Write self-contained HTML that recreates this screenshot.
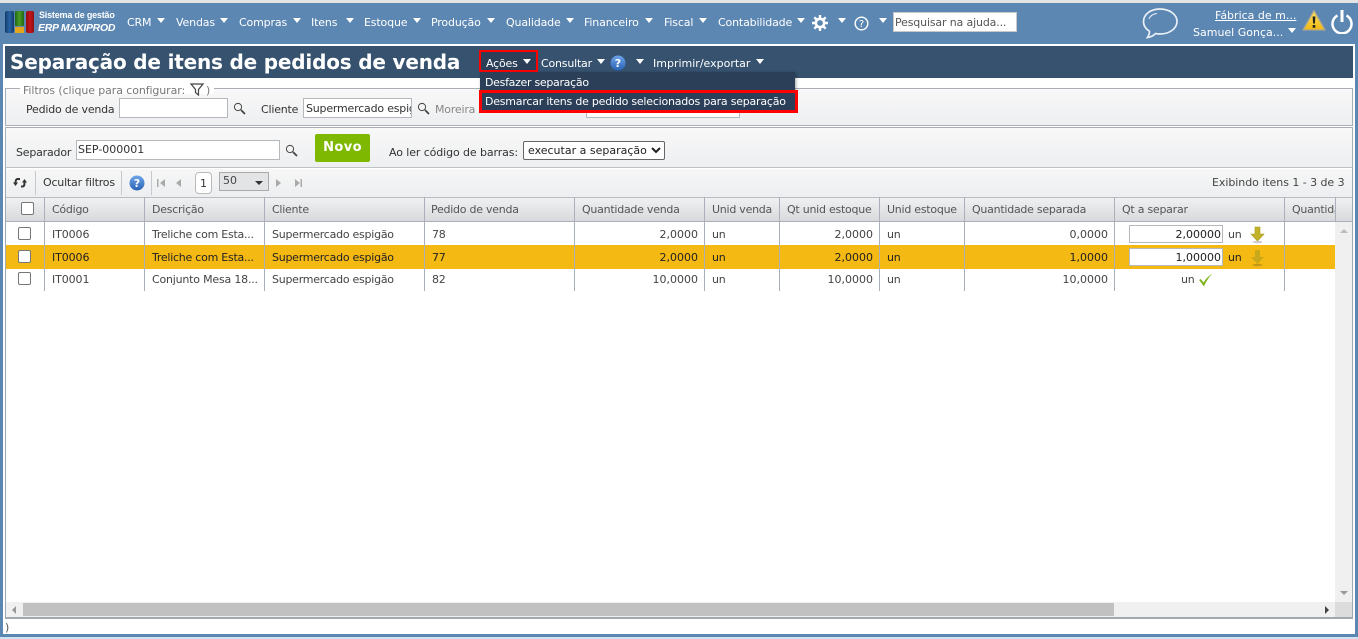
<!DOCTYPE html>
<html><head><meta charset="utf-8">
<style>
html,body{margin:0;padding:0}
body{width:1358px;height:639px;position:relative;overflow:hidden;background:#fff;font-family:"DejaVu Sans","Liberation Sans",sans-serif;font-size:11px;color:#444}
.a,.t{position:absolute;white-space:nowrap}
.t{line-height:14px;letter-spacing:-.2px;margin-top:1px}
.m{color:#fff;top:15px;letter-spacing:-.15px}
.c{position:absolute;width:0;height:0;margin:1px 0 0 1px;border-left:4.5px solid transparent;border-right:4.5px solid transparent;border-top:5px solid #fff}
.inp{position:absolute;background:#fff;border:1px solid #b5b8bc;box-sizing:border-box;line-height:19px;padding-left:2px;color:#333;white-space:nowrap;overflow:hidden;letter-spacing:-.2px}
.v{position:absolute;width:1px;background:#a9b0b9}
.h{top:202px;color:#555;letter-spacing:-.25px}
.cb{position:absolute;width:11px;height:11px;border:1px solid #777;border-radius:2px;background:#fff}
.r{text-align:right;letter-spacing:0}
</style></head><body>
<div class="a" style="left:0;top:0;width:1358px;height:3px;background:#e4e4e4"></div>
<div class="a" style="left:0;top:3px;width:1358px;height:634px;background:#5c87b2"></div>
<div class="a" style="left:0;top:637px;width:1358px;height:2px;background:#cfe3f2"></div>
<div class="a" style="left:3px;top:44px;width:1352px;height:590px;background:#fff"></div>

<!-- logo -->
<div class="a" style="left:5px;top:11px;width:9px;height:22px;background:linear-gradient(90deg,#123a6b,#2a64a4,#123a6b);border-radius:2px"></div>
<div class="a" style="left:15px;top:11px;width:9px;height:15px;background:linear-gradient(90deg,#1f6a12,#4d9a27,#1f6a12);border-radius:1px"></div>
<div class="a" style="left:15px;top:27px;width:9px;height:6px;background:#e2a51c"></div>
<div class="a" style="left:26px;top:11px;width:8px;height:22px;background:linear-gradient(90deg,#8e0f12,#c4161a,#8e0f12);border-radius:2px"></div>
<div class="t" style="left:39px;top:8px;color:#fff;font-size:9px;line-height:12px;font-weight:bold;letter-spacing:-.2px;font-family:'Liberation Sans',sans-serif">Sistema de gestão</div>
<div class="t" style="left:38px;top:20px;color:#fff;font-size:10.500px;font-style:italic;font-weight:bold;letter-spacing:-.3px;font-family:'Liberation Sans',sans-serif">ERP MAXIPROD</div>

<!-- nav -->
<div class="t m" style="left:127px">CRM</div><div class="c" style="left:156px;top:17px"></div>
<div class="t m" style="left:176px">Vendas</div><div class="c" style="left:219px;top:17px"></div>
<div class="t m" style="left:239px">Compras</div><div class="c" style="left:292px;top:17px"></div>
<div class="t m" style="left:311px">Itens</div><div class="c" style="left:345px;top:17px"></div>
<div class="t m" style="left:364px">Estoque</div><div class="c" style="left:412px;top:17px"></div>
<div class="t m" style="left:431px">Produção</div><div class="c" style="left:486px;top:17px"></div>
<div class="t m" style="left:506px">Qualidade</div><div class="c" style="left:565px;top:17px"></div>
<div class="t m" style="left:584px">Financeiro</div><div class="c" style="left:644px;top:17px"></div>
<div class="t m" style="left:664px">Fiscal</div><div class="c" style="left:698px;top:17px"></div>
<div class="t m" style="left:718px">Contabilidade</div><div class="c" style="left:796px;top:17px"></div>
<svg class="a" style="left:812px;top:15px" width="16" height="16" viewBox="0 0 16 16"><circle cx="8" cy="8" r="4.200" fill="none" stroke="#fff" stroke-width="2.600"/><g stroke="#fff" stroke-width="2.400"><path d="M8 0v3M8 13v3M0 8h3M13 8h3M2.300 2.300l2.100 2.100M11.600 11.600l2.100 2.100M2.300 13.700l2.100-2.100M11.600 4.400l2.100-2.100"/></g></svg>
<div class="c" style="left:837px;top:17px"></div>
<svg class="a" style="left:854px;top:16px" width="15" height="15" viewBox="0 0 15 15"><circle cx="7.500" cy="7.500" r="6.300" fill="none" stroke="#fff" stroke-width="1.400"/><text x="7.500" y="11" text-anchor="middle" font-size="10" font-family="DejaVu Sans" fill="#fff">?</text></svg>
<div class="c" style="left:878px;top:17px"></div>
<div class="inp" style="left:893px;top:12px;width:124px;height:20px;color:#555;padding-left:1px;line-height:19px;border-color:#c8c8c8;letter-spacing:-.15px">Pesquisar na ajuda...</div>

<svg class="a" style="left:1141px;top:7px" width="38" height="33" viewBox="0 0 38 33"><path d="M19 2C9.500 2 2.500 7.500 2.500 14.500c0 4 2.300 7.500 6 9.800 0 2.500-.8 4.500-2 6.200 3.200-.5 6-2 8-3.900 1.400.3 3 .4 4.500.4 9.500 0 17-5.500 17-12.500S28.500 2 19 2z" fill="none" stroke="#e9f0f6" stroke-width="1.700"/><path d="M8 12c1-3 4-5 8-5.500" fill="none" stroke="#e9f0f6" stroke-width="1"/></svg>
<div class="t" style="left:1215px;top:8px;color:#fff;text-decoration:underline;letter-spacing:0">Fábrica de m...</div>
<div class="t" style="left:1193px;top:25px;color:#fff;letter-spacing:0">Samuel Gonça...</div>
<div class="c" style="left:1287px;top:27px"></div>
<svg class="a" style="left:1302px;top:9px" width="24" height="22" viewBox="0 0 24 22"><defs><linearGradient id="w" x1="0" y1="0" x2="0" y2="1"><stop offset="0" stop-color="#fbe36a"/><stop offset="1" stop-color="#f3b80f"/></linearGradient></defs><path d="M12 1.500 23 21H1z" fill="url(#w)" stroke="#a8a493" stroke-width="1.300" stroke-linejoin="round"/><path d="M10.600 7.500h2.800l-.5 7h-1.800zM10.700 16h2.600v2.800h-2.600z" fill="#222"/></svg>
<svg class="a" style="left:1330px;top:9px" width="24" height="25" viewBox="0 0 24 25"><path d="M7.500 6.500a9.500 9.500 0 1 0 9 0" fill="none" stroke="#fff" stroke-width="2.500"/><path d="M12 1v12" stroke="#fff" stroke-width="3"/></svg>

<!-- title bar -->
<div class="a" style="left:5px;top:46px;width:1348px;height:32px;background:#36526f"></div>
<div class="t" style="left:10px;top:49px;color:#fff;font-size:20px;font-weight:bold;line-height:25px;letter-spacing:-.19px;font-family:'DejaVu Sans',sans-serif">Separação de itens de pedidos de venda</div>
<div class="a" style="left:479px;top:50px;width:59px;height:22px;box-sizing:border-box;border:2px solid #f00;background:#2b3f58"></div>
<div class="t" style="left:486px;top:56px;color:#fff">Ações</div><div class="c" style="left:522px;top:58px"></div>
<div class="t" style="left:541px;top:56px;color:#fff">Consultar</div><div class="c" style="left:596px;top:58px"></div>
<svg class="a" style="left:610px;top:55px" width="16" height="16" viewBox="0 0 16 16"><defs><linearGradient id="g" x1="0" y1="0" x2="0" y2="1"><stop offset="0" stop-color="#6fa5e8"/><stop offset="1" stop-color="#2a62b5"/></linearGradient></defs><circle cx="8" cy="8" r="7.500" fill="url(#g)"/><text x="8" y="12" text-anchor="middle" font-size="11" font-weight="bold" font-family="DejaVu Sans" fill="#fff">?</text></svg>
<div class="c" style="left:635px;top:58px"></div>
<div class="t" style="left:653px;top:56px;color:#fff;letter-spacing:0">Imprimir/exportar</div><div class="c" style="left:755px;top:58px"></div>

<!-- filtros -->
<div class="a" style="left:5px;top:88px;width:1348px;height:38px;box-sizing:border-box;border:1px solid #a9aeb5;background:linear-gradient(#f8f8f8,#eeeff1)"></div>
<div class="a" style="left:20px;top:84px;width:194px;height:10px;background:#fff"></div>
<div class="t" style="left:23px;top:83px;color:#777;letter-spacing:-.1px">Filtros (clique para configurar:</div>
<svg class="a" style="left:190px;top:83px" width="14" height="13" viewBox="0 0 14 13"><path d="M1 1h12L8.500 6.500V12L5.500 9.500v-3z" fill="none" stroke="#444" stroke-width="1.200"/></svg>
<div class="t" style="left:206px;top:83px;color:#777">)</div>
<div class="t" style="left:26px;top:102px;color:#333">Pedido de venda</div>
<div class="inp" style="left:119px;top:98px;width:109px;height:20px"></div>
<svg class="a" style="left:233px;top:102px" width="13" height="13" viewBox="0 0 13 13"><circle cx="5" cy="5" r="3.600" fill="none" stroke="#444" stroke-width="1"/><path d="M8 8l4 4" stroke="#444" stroke-width="1.800"/></svg>
<div class="t" style="left:261px;top:102px;color:#333">Cliente</div>
<div class="inp" style="left:303px;top:98px;width:109px;height:20px">Supermercado espigão</div>
<svg class="a" style="left:417px;top:102px" width="13" height="13" viewBox="0 0 13 13"><circle cx="5" cy="5" r="3.600" fill="none" stroke="#444" stroke-width="1"/><path d="M8 8l4 4" stroke="#444" stroke-width="1.800"/></svg>
<div class="t" style="left:435px;top:102px;color:#888">Moreira</div>
<div class="inp" style="left:586px;top:98px;width:154px;height:20px"></div>

<!-- menu dropdown -->
<div class="a" style="left:480px;top:72px;width:315px;height:19px;background:#2b3f58;box-shadow:1px 1px 3px rgba(0,0,0,.35)"></div>
<div class="t" style="left:485px;top:75px;color:#fff;letter-spacing:-.3px">Desfazer separação</div>
<div class="a" style="left:479px;top:90px;width:319px;height:23px;box-sizing:border-box;border:3px solid #f00;background:#2b3f58"></div>
<div class="t" style="left:485px;top:94px;color:#fff;letter-spacing:-.22px">Desmarcar itens de pedido selecionados para separação</div>

<!-- separador -->
<div class="a" style="left:5px;top:127px;width:1348px;height:42px;box-sizing:border-box;border:1px solid #a9aeb5;border-bottom:2px solid #bfc3c8;background:linear-gradient(#f8f8f8,#eeeff1)"></div>
<div class="t" style="left:16px;top:145px;color:#333">Separador</div>
<div class="inp" style="left:76px;top:140px;width:204px;height:20px;line-height:18px;padding-left:1px;letter-spacing:0">SEP-000001</div>
<svg class="a" style="left:285px;top:144px" width="13" height="13" viewBox="0 0 13 13"><circle cx="5" cy="5" r="3.600" fill="none" stroke="#444" stroke-width="1"/><path d="M8 8l4 4" stroke="#444" stroke-width="1.800"/></svg>
<div class="a" style="left:315px;top:134px;width:55px;height:28px;background:#7fb800;border-radius:2px;color:#fff;font-weight:bold;font-size:13px;line-height:28px;text-align:center;letter-spacing:.4px">Novo</div>
<div class="t" style="left:389px;top:145px;color:#333;letter-spacing:-.1px">Ao ler código de barras:</div>
<div class="inp" style="left:523px;top:141px;width:142px;height:19px;border:1px solid #666;border-radius:2px;padding-left:4px;color:#222;line-height:18px;letter-spacing:0">executar a separação</div>
<svg class="a" style="left:651px;top:147px" width="10" height="7" viewBox="0 0 10 7"><path d="M1 1l4 4 4-4" fill="none" stroke="#222" stroke-width="2"/></svg>

<!-- grid box -->
<div class="a" style="left:5px;top:168px;width:1348px;height:451px;box-sizing:border-box;border:1px solid #a2a8b0;border-top:none;border-bottom:2px solid #a2a8b0;background:#fff"></div>
<!-- toolbar -->
<div class="a" style="left:6px;top:169px;width:1346px;height:28px;background:linear-gradient(#f7f7f7,#eceef0)"></div>
<div class="v" style="left:35px;top:171px;height:24px;background:#c5c8cc"></div>
<div class="v" style="left:121px;top:171px;height:24px;background:#c5c8cc"></div>
<div class="v" style="left:151px;top:171px;height:24px;background:#c5c8cc"></div>
<svg class="a" style="left:13px;top:177px" width="15" height="12" viewBox="0 0 15 12"><path d="M7 2H4.500C3 2 2.500 3.500 2.500 6.500" fill="none" stroke="#333" stroke-width="2"/><path d="M0 5.500h5L2.500 9z" fill="#333"/><path d="M8 9.500h1.500c1.500 0 2-1 2-4.500" fill="none" stroke="#333" stroke-width="2"/><path d="M9 5.500h5L11.500 2z" fill="#333"/></svg>
<div class="t" style="left:43px;top:175px;color:#333">Ocultar filtros</div>
<svg class="a" style="left:129px;top:175px" width="16" height="16" viewBox="0 0 16 16"><circle cx="8" cy="8" r="7.500" fill="url(#g)"/><text x="8" y="12" text-anchor="middle" font-size="11" font-weight="bold" font-family="DejaVu Sans" fill="#fff">?</text></svg>
<svg class="a" style="left:157px;top:178px" width="145" height="10" viewBox="0 0 145 10"><g fill="#aaa"><path d="M0 1h1.500v8H0zM8 1v8L3 5zM24 1v8l-5-4z"/><path d="M119 1v8l5-4zM138 1v8l5-4zM143.500 1h1.500v8h-1.500z"/></g></svg>
<div class="a" style="left:195px;top:172px;width:17px;height:22px;box-sizing:border-box;background:#fff;border:1px solid #bbb;border-radius:4px;text-align:center;line-height:21px;color:#333">1</div>
<div class="a" style="left:219px;top:172px;width:50px;height:19px;box-sizing:border-box;background:#e3e4e6;border:1px solid #aaa;line-height:16px;padding-left:3px;color:#444">50</div>
<div class="a" style="left:255px;top:181px;width:0;height:0;border-left:4px solid transparent;border-right:4px solid transparent;border-top:4px solid #333"></div>
<div class="t" style="left:1212px;top:175px;color:#444;letter-spacing:-.05px">Exibindo itens 1 - 3 de 3</div>

<!-- header -->
<div class="a" style="left:6px;top:197px;width:1346px;height:25px;box-sizing:border-box;border-top:1px solid #b8bdc3;border-bottom:1px solid #a9b0b9;background:linear-gradient(#f0f1f2,#d7d9dc)"></div>
<div class="cb" style="left:21px;top:202px"></div>
<div class="t h" style="left:52px">Código</div>
<div class="t h" style="left:152px">Descrição</div>
<div class="t h" style="left:272px">Cliente</div>
<div class="t h" style="left:431px">Pedido de venda</div>
<div class="t h" style="left:582px">Quantidade venda</div>
<div class="t h" style="left:712px">Unid venda</div>
<div class="t h" style="left:787px">Qt unid estoque</div>
<div class="t h" style="left:887px">Unid estoque</div>
<div class="t h" style="left:972px">Quantidade separada</div>
<div class="t h" style="left:1122px">Qt a separar</div>
<div class="a h" style="left:1292px;top:203px;width:43px;overflow:hidden;white-space:nowrap;line-height:14px">Quantidade</div>

<!-- rows -->
<div class="a" style="left:6px;top:245px;width:1329px;height:24px;background:#f5b914"></div>
<div class="v" style="left:44px;top:197px;height:94px"></div>
<div class="v" style="left:144px;top:197px;height:94px"></div>
<div class="v" style="left:264px;top:197px;height:94px"></div>
<div class="v" style="left:424px;top:197px;height:94px"></div>
<div class="v" style="left:574px;top:197px;height:94px"></div>
<div class="v" style="left:704px;top:197px;height:94px"></div>
<div class="v" style="left:779px;top:197px;height:94px"></div>
<div class="v" style="left:879px;top:197px;height:94px"></div>
<div class="v" style="left:964px;top:197px;height:94px"></div>
<div class="v" style="left:1114px;top:197px;height:94px"></div>
<div class="v" style="left:1284px;top:197px;height:94px"></div>
<div class="v" style="left:1335px;top:197px;height:25px"></div>

<div class="cb" style="left:18px;top:227px"></div>
<div class="t" style="left:52px;top:227px;letter-spacing:-.1px">IT0006</div>
<div class="t" style="left:152px;top:227px;letter-spacing:-.25px">Treliche com Esta...</div>
<div class="t" style="left:272px;top:227px;letter-spacing:-.25px">Supermercado espigão</div>
<div class="t" style="left:432px;top:227px">78</div>
<div class="t r" style="left:574px;top:227px;width:124px">2,0000</div>
<div class="t" style="left:712px;top:227px">un</div>
<div class="t r" style="left:779px;top:227px;width:94px">2,0000</div>
<div class="t" style="left:887px;top:227px">un</div>
<div class="t r" style="left:964px;top:227px;width:144px">0,0000</div>
<div class="inp r" style="left:1129px;top:225px;width:94px;height:18px;padding-right:1px;line-height:17px;color:#222">2,00000</div>
<div class="t" style="left:1228px;top:227px">un</div>
<svg class="a" style="left:1250px;top:226px" width="15" height="18" viewBox="0 0 15 18"><path d="M5 1h5v7h4l-6.500 7L1 8h4z" fill="#c2b32a" stroke="#a89a1c" stroke-width=".6"/><ellipse cx="7.500" cy="16" rx="5" ry="1.300" fill="#ccc"/></svg>

<div class="cb" style="left:18px;top:250px"></div>
<div class="t" style="left:52px;top:250px;color:#222;letter-spacing:-.1px">IT0006</div>
<div class="t" style="left:152px;top:250px;color:#222;letter-spacing:-.25px">Treliche com Esta...</div>
<div class="t" style="left:272px;top:250px;color:#222;letter-spacing:-.25px">Supermercado espigão</div>
<div class="t" style="left:432px;top:250px;color:#222">77</div>
<div class="t r" style="left:574px;top:250px;width:124px;color:#222">2,0000</div>
<div class="t" style="left:712px;top:250px;color:#222">un</div>
<div class="t r" style="left:779px;top:250px;width:94px;color:#222">2,0000</div>
<div class="t" style="left:887px;top:250px;color:#222">un</div>
<div class="t r" style="left:964px;top:250px;width:144px;color:#222">1,0000</div>
<div class="inp r" style="left:1129px;top:248px;width:94px;height:18px;padding-right:1px;line-height:17px;color:#222">1,00000</div>
<div class="t" style="left:1228px;top:250px;color:#222">un</div>
<svg class="a" style="left:1250px;top:249px" width="15" height="18" viewBox="0 0 15 18"><path d="M5 1h5v7h4l-6.500 7L1 8h4z" fill="#c9a91a"/><ellipse cx="7.500" cy="16" rx="5" ry="1.300" fill="#c49a14"/></svg>

<div class="cb" style="left:18px;top:272px"></div>
<div class="t" style="left:52px;top:272px;letter-spacing:-.1px">IT0001</div>
<div class="t" style="left:152px;top:272px;letter-spacing:-.2px">Conjunto Mesa 18...</div>
<div class="t" style="left:272px;top:272px;letter-spacing:-.25px">Supermercado espigão</div>
<div class="t" style="left:432px;top:272px">82</div>
<div class="t r" style="left:574px;top:272px;width:124px">10,0000</div>
<div class="t" style="left:712px;top:272px">un</div>
<div class="t r" style="left:779px;top:272px;width:94px">10,0000</div>
<div class="t" style="left:887px;top:272px">un</div>
<div class="t r" style="left:964px;top:272px;width:144px">10,0000</div>
<div class="t" style="left:1181px;top:272px">un</div>
<svg class="a" style="left:1198px;top:273px" width="15" height="14" viewBox="0 0 15 14"><path d="M1 7l1.800-1 2.700 3.500C7.500 6 10.500 3 14.500.5 11 4 8 8.500 6 13.500z" fill="#7fb51e"/></svg>

<!-- scrollbars -->
<div class="a" style="left:1335px;top:222px;width:17px;height:380px;background:#f0f0f0"></div>
<div class="a" style="left:1340px;top:229px;width:0;height:0;border-left:4px solid transparent;border-right:4px solid transparent;border-bottom:4px solid #bbb"></div>
<div class="a" style="left:1340px;top:591px;width:0;height:0;border-left:4px solid transparent;border-right:4px solid transparent;border-top:4px solid #999"></div>
<div class="a" style="left:6px;top:602px;width:1346px;height:15px;background:#f0f0f0"></div>
<div class="a" style="left:1335px;top:602px;width:17px;height:15px;background:#dcdcdc"></div>
<div class="a" style="left:23px;top:603px;width:1091px;height:13px;background:#c1c1c1"></div>
<div class="a" style="left:12px;top:606px;width:0;height:0;border-top:4px solid transparent;border-bottom:4px solid transparent;border-right:4px solid #999"></div>
<div class="a" style="left:1325px;top:606px;width:0;height:0;border-top:4px solid transparent;border-bottom:4px solid transparent;border-left:4px solid #444"></div>

<div class="t" style="left:5px;top:620px;color:#555">)</div>
</body></html>
